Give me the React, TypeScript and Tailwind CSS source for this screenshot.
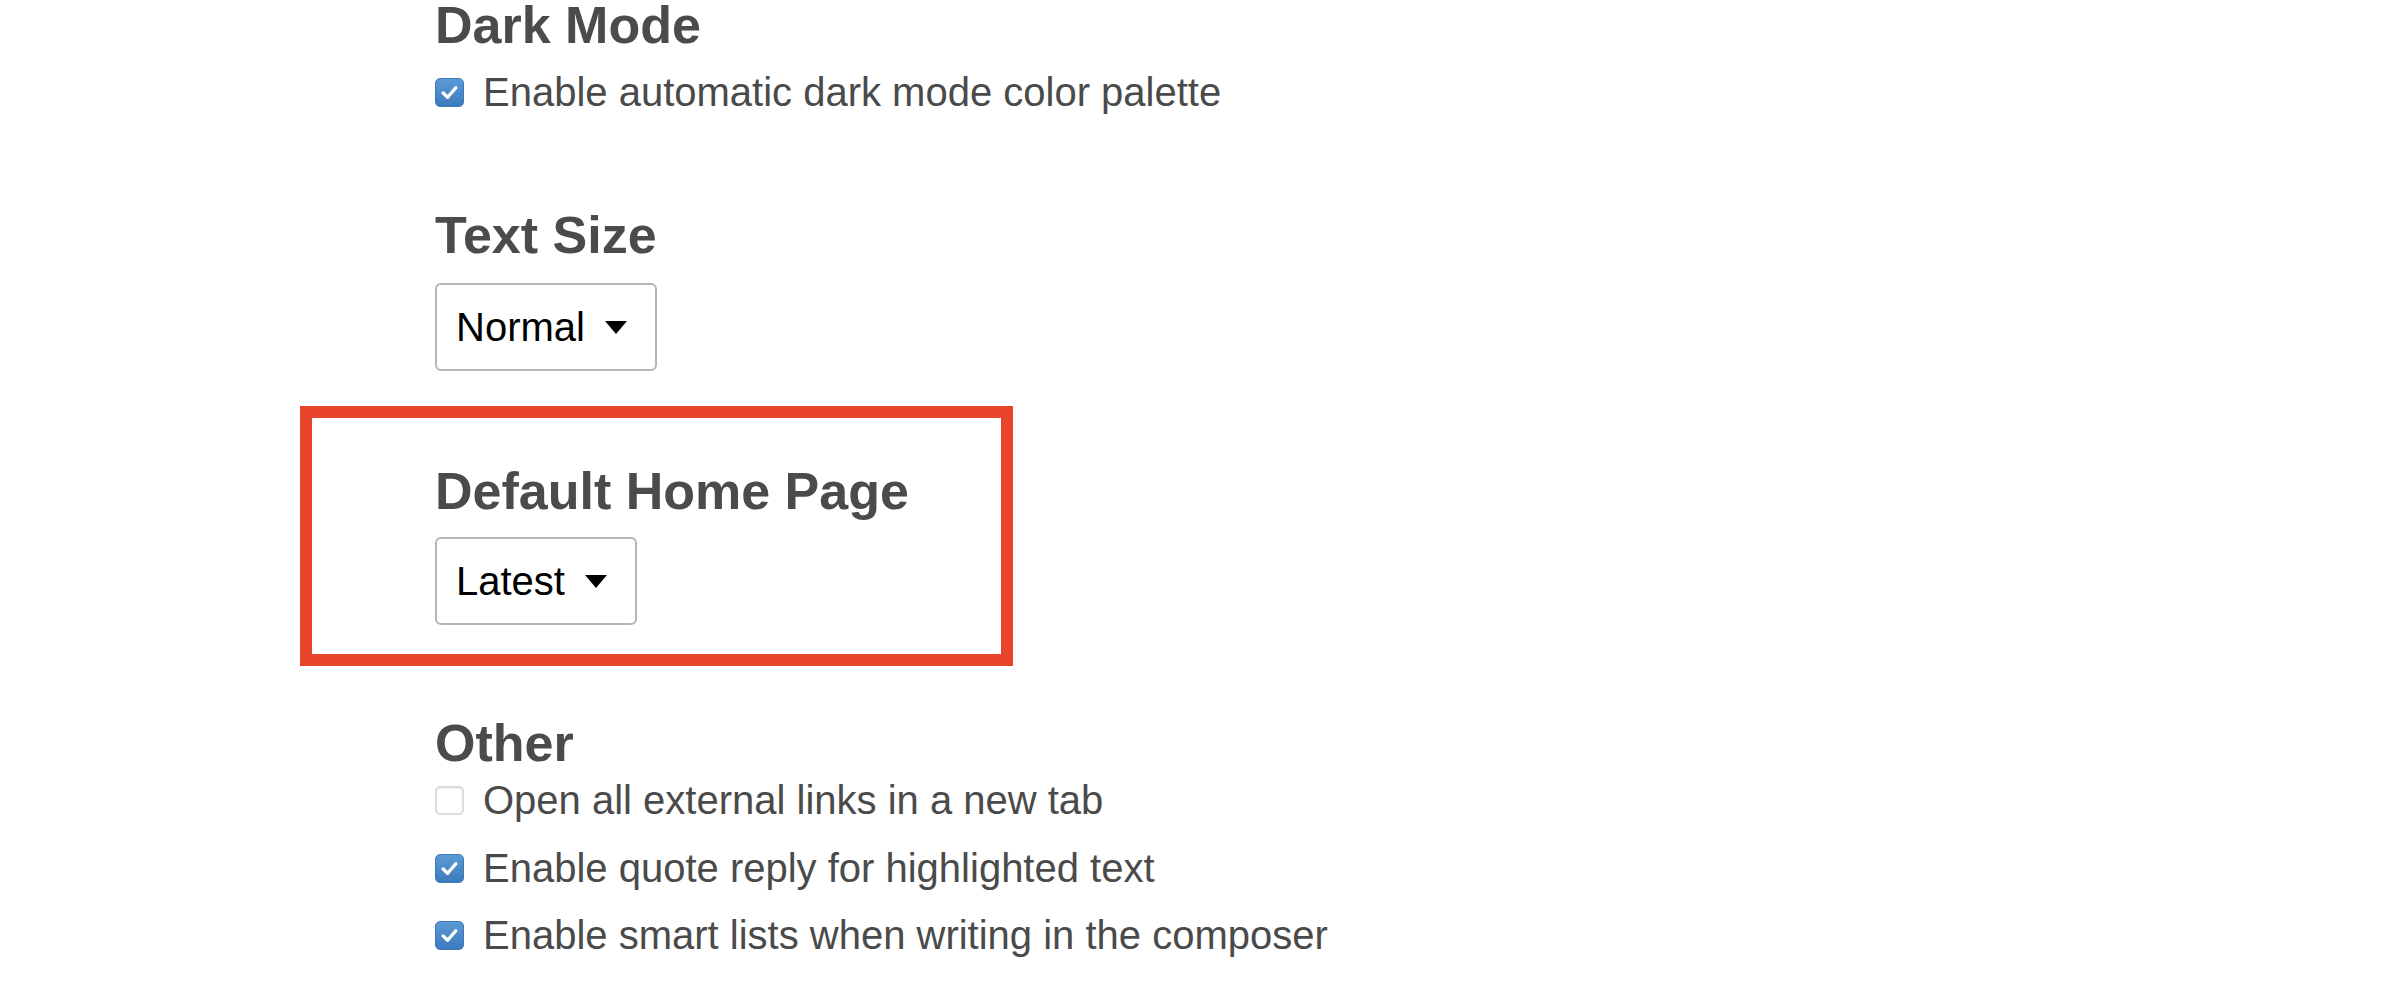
import React from "react";

function Check({ checked }: { checked: boolean }) {
  if (checked) {
    return (
      <span className="flex h-[29px] w-[29px] shrink-0 items-center justify-center rounded-[5px] border border-[#3f78b6] bg-gradient-to-b from-[#5c9ad6] to-[#3d7abd]">
        <svg width="19" height="17" viewBox="0 0 18 16" fill="none">
          <path d="M3 8.5 L7.2 12.5 L15 3.5" stroke="white" strokeWidth="3.2" strokeLinecap="round" strokeLinejoin="round" />
        </svg>
      </span>
    );
  }
  return <span className="block h-[29px] w-[29px] shrink-0 rounded-[5px] border-2 border-[#dcdcdc] bg-white shadow-[inset_0_1px_2px_rgba(0,0,0,0.06)]" />;
}

function Row({ checked, label, className = "" }: { checked: boolean; label: string; className?: string }) {
  return (
    <div className={"flex h-[48px] items-center gap-[19px] " + className}>
      <Check checked={checked} />
      <span className="text-[40px] leading-[48px] text-[#4a4a4a]">{label}</span>
    </div>
  );
}

function Heading({ children, className = "" }: { children: React.ReactNode; className?: string }) {
  return <h3 className={"text-[52px] font-bold leading-[48px] text-[#4b4b4b] " + className}>{children}</h3>;
}

function Select({ value, className = "" }: { value: string; className?: string }) {
  return (
    <div className={"flex h-[88px] w-fit items-center gap-[20px] rounded-[6px] border-2 border-[#b5b5b5] bg-white pl-[19px] pr-[28px] " + className}>
      <span className="text-[40px] leading-[48px] text-black">{value}</span>
      <span className="block h-0 w-0 border-x-[11px] border-t-[13px] border-x-transparent border-t-black" />
    </div>
  );
}

export default function App() {
  return (
    <div className="h-[990px] w-full overflow-hidden bg-white" style={{ fontFamily: '"Liberation Sans", Arial, sans-serif' }}>
      <div className="flex flex-col pl-[300px]">
        <section className="pl-[135px] pt-[1px]">
          <Heading>Dark Mode</Heading>
          <Row checked label="Enable automatic dark mode color palette" className="mt-[19px]" />
        </section>

        <section className="mt-[95px] pl-[135px]">
          <Heading>Text Size</Heading>
          <Select value="Normal" className="mt-[24px]" />
        </section>

        <section className="mt-[35px] w-[713px] border-[12px] border-[#e8442b] pb-[29px] pl-[123px] pt-[49px]">
          <Heading>Default Home Page</Heading>
          <Select value="Latest" className="mt-[22px]" />
        </section>

        <section className="mt-[53px] pl-[135px]">
          <Heading>Other</Heading>
          <Row checked={false} label="Open all external links in a new tab" className="mt-[9px]" />
          <Row checked label="Enable quote reply for highlighted text" className="mt-[20px]" />
          <Row checked label="Enable smart lists when writing in the composer" className="mt-[19px]" />
        </section>
      </div>
    </div>
  );
}
